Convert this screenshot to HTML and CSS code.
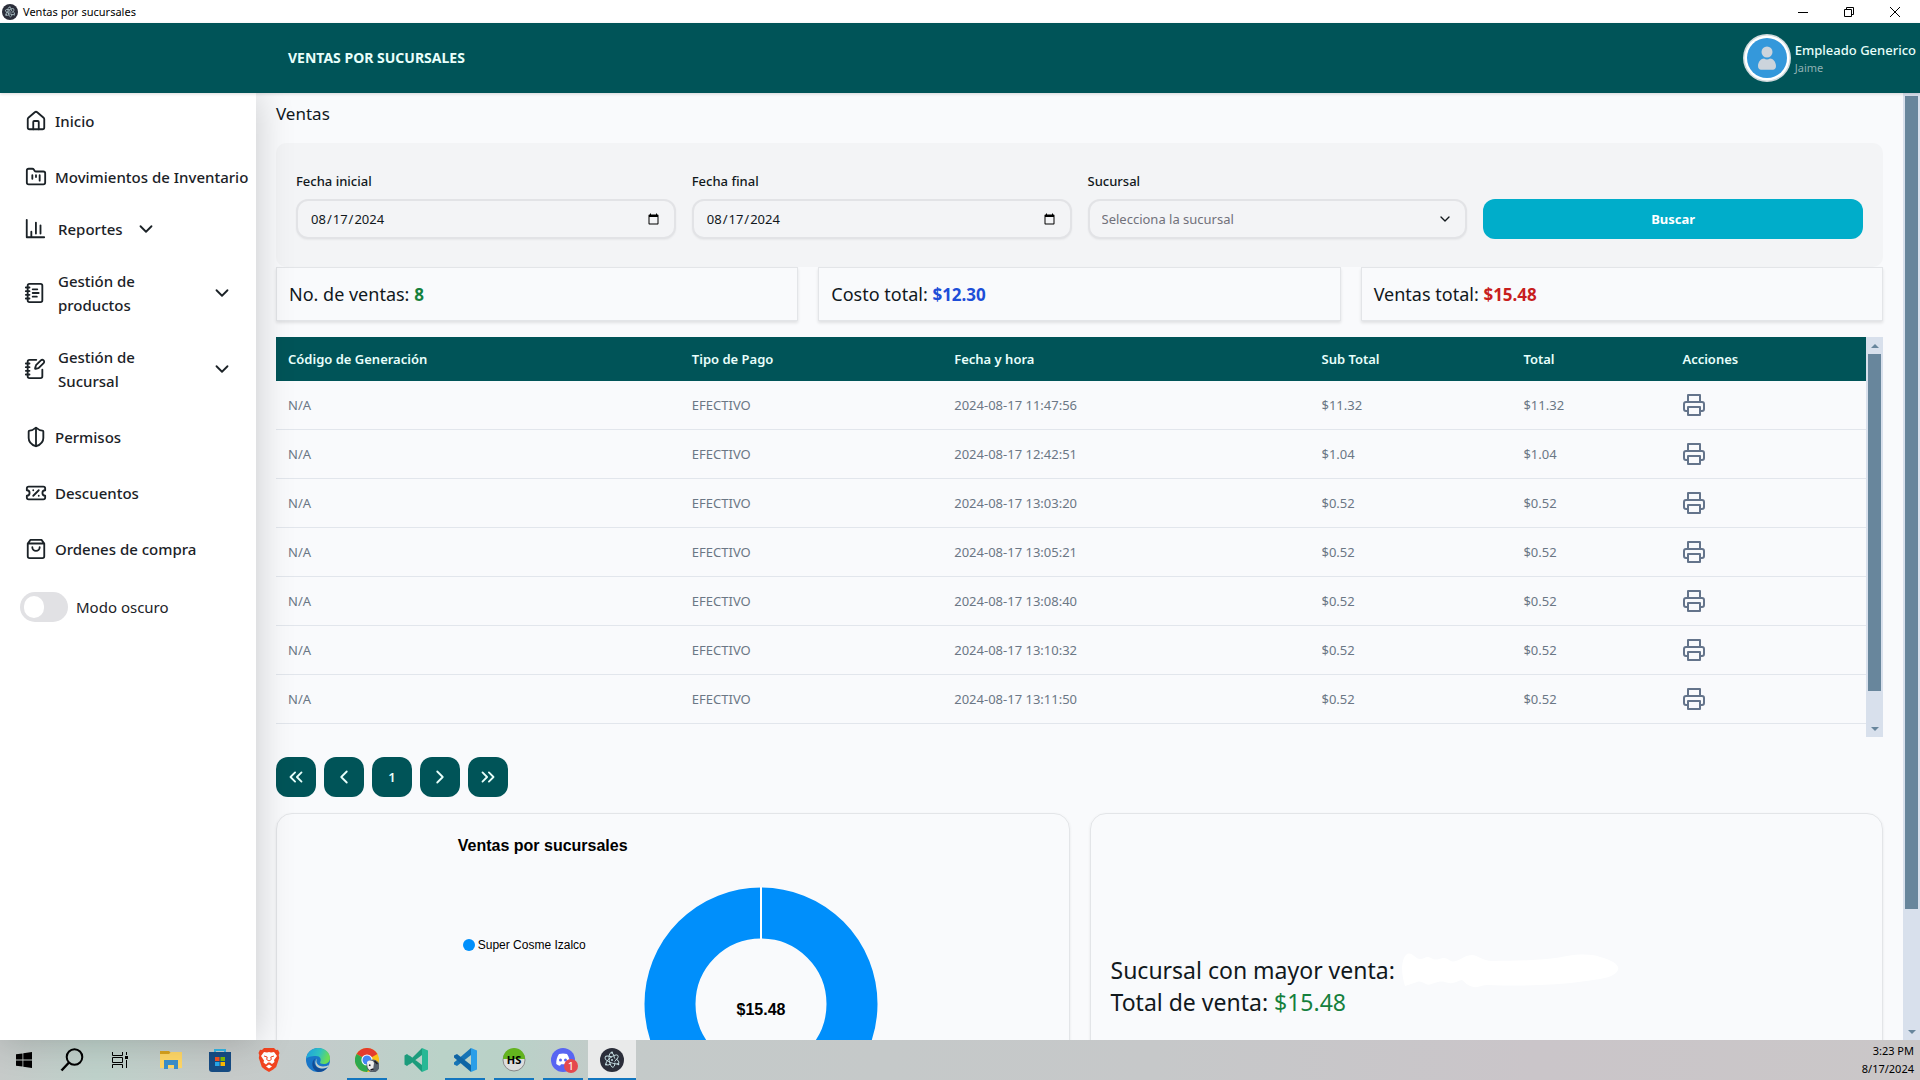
FILE: index.html
```html
<!DOCTYPE html>
<html lang="es">
<head>
<meta charset="utf-8">
<title>Ventas por sucursales</title>
<link rel="stylesheet" href="styles.css">
</head>
<body>
<svg class="sprite" aria-hidden="true">
  <symbol id="i-electron" viewBox="0 0 24 24">
    <circle cx="12" cy="12" r="12" fill="#2b2e3a"/>
    <g fill="none" stroke="#c6dfe4" stroke-width=".9">
      <ellipse cx="12" cy="12" rx="7.4" ry="2.8" transform="rotate(22 12 12)" stroke-dasharray="24 4"/>
      <ellipse cx="12" cy="12" rx="7.4" ry="2.8" transform="rotate(82 12 12)" stroke-dasharray="24 4"/>
      <ellipse cx="12" cy="12" rx="7.4" ry="2.8" transform="rotate(142 12 12)" stroke-dasharray="24 4"/>
    </g>
    <g fill="#c6dfe4"><circle cx="12" cy="12" r="1"/><circle cx="6" cy="16.5" r="1"/><circle cx="18.3" cy="16.2" r="1"/><circle cx="12" cy="4.6" r="1"/></g>
  </symbol>
  <symbol id="i-down" viewBox="0 0 24 24"><path d="m6 9 6 6 6-6"/></symbol>
  <symbol id="i-print" viewBox="0 0 24 24"><path d="M6 18H4a2 2 0 0 1-2-2v-5a2 2 0 0 1 2-2h16a2 2 0 0 1 2 2v5a2 2 0 0 1-2 2h-2"/><path d="M6 9V2h12v7"/><path d="M6 14h12v8H6z"/></symbol>
</svg>

<div class="titlebar">
  <svg class="app-icon"><use href="#i-electron"/></svg>
  <span class="window-title">Ventas por sucursales</span>
  <button class="win-btn" aria-label="Minimizar"><svg viewBox="0 0 12 12"><path d="M1 6.500h10"/></svg></button>
  <button class="win-btn" aria-label="Restaurar"><svg viewBox="0 0 12 12"><path d="M1.500 3.500h7v7h-7zM3.500 3.500v-2h7v7h-2"/></svg></button>
  <button class="win-btn" aria-label="Cerrar"><svg viewBox="0 0 12 12"><path d="M1 1l10 10M11 1L1 11"/></svg></button>
</div>

<header class="topbar">
  <h1>VENTAS POR SUCURSALES</h1>
  <div class="user">
    <svg class="avatar" viewBox="0 0 48 48"><circle cx="24" cy="24" r="24" fill="#d0dadd"/><circle cx="24" cy="24" r="22.500" fill="#fff"/><circle cx="24" cy="24" r="20" fill="#3498db"/><circle cx="24" cy="18" r="5.500" fill="#ccd4dc"/><path d="M15 32c0-4 3-7.500 6-7.500 2 1.200 4 1.200 6 0 3 0 6 3.500 6 7.500 0 2.500-1.500 3.800-3 3.800H18c-1.500 0-3-1.300-3-3.800z" fill="#ccd4dc"/></svg>
    <div class="user-text"><span class="user-name">Empleado Generico</span><span class="user-role">Jaime</span></div>
  </div>
</header>

<div class="shell">
  <nav class="sidebar">
    <a class="nav-item" href="#"><svg class="icon" viewBox="0 0 24 24"><path d="M15 21v-8a1 1 0 0 0-1-1h-4a1 1 0 0 0-1 1v8"/><path d="M3 10a2 2 0 0 1 .7-1.500l7-6a2 2 0 0 1 2.600 0l7 6A2 2 0 0 1 21 10v9a2 2 0 0 1-2 2H5a2 2 0 0 1-2-2z"/></svg>Inicio</a>
    <a class="nav-item" href="#"><svg class="icon" viewBox="0 0 24 24"><path d="M4 20h16a2 2 0 0 0 2-2V8a2 2 0 0 0-2-2h-7.900a2 2 0 0 1-1.700-.9L9.600 3.900A2 2 0 0 0 7.900 3H4a2 2 0 0 0-2 2v13c0 1.100.9 2 2 2Z"/><path d="M8 10v4M12 10v2M16 10v6"/></svg>Movimientos de Inventario</a>
    <button class="nav-group short"><svg class="icon" viewBox="0 0 24 24"><path d="M3 2v19h19M8 21v-5M13 17V5M18 17V8M8 17v-2"/></svg><span>Reportes</span><svg class="icon caret"><use href="#i-down"/></svg></button>
    <button class="nav-group"><svg class="icon" viewBox="0 0 24 24"><path d="M2 6h4M2 10h4M2 14h4M2 18h4"/><rect width="16" height="20" x="4" y="2" rx="2"/><path d="M9.500 8h5M9.500 12H16M9.500 16H14"/></svg><span>Gestión de productos</span><svg class="icon caret"><use href="#i-down"/></svg></button>
    <button class="nav-group"><svg class="icon" viewBox="0 0 24 24"><path d="M13.400 2H6a2 2 0 0 0-2 2v16a2 2 0 0 0 2 2h12a2 2 0 0 0 2-2v-7.400"/><path d="M2 6h4M2 10h4M2 14h4M2 18h4"/><path d="M21.400 5.600a1 1 0 1 0-3-3l-5 5a2 2 0 0 0-.5.900l-.8 2.800a.5.5 0 0 0 .6.600l2.900-.8a2 2 0 0 0 .8-.5z"/></svg><span>Gestión de Sucursal</span><svg class="icon caret"><use href="#i-down"/></svg></button>
    <a class="nav-item" href="#"><svg class="icon" viewBox="0 0 24 24"><path d="M20 13c0 5-3.500 7.500-7.700 9a1 1 0 0 1-.6 0C7.500 20.500 4 18 4 13V6a1 1 0 0 1 1-1c2 0 4.500-1.200 6.200-2.700a1.200 1.200 0 0 1 1.600 0C14.500 3.800 17 5 19 5a1 1 0 0 1 1 1z"/><path d="M12 22V2"/></svg>Permisos</a>
    <a class="nav-item" href="#"><svg class="icon" viewBox="0 0 24 24"><path d="M2 9a3 3 0 1 1 0 6v2a2 2 0 0 0 2 2h16a2 2 0 0 0 2-2v-2a3 3 0 1 1 0-6V7a2 2 0 0 0-2-2H4a2 2 0 0 0-2 2Z"/><path d="M9 9h.01M15 9l-6 6M15 15h.01"/></svg>Descuentos</a>
    <a class="nav-item" href="#"><svg class="icon" viewBox="0 0 24 24"><path d="M6 2 3 6v14a2 2 0 0 0 2 2h14a2 2 0 0 0 2-2V6l-3-4ZM3 6h18M16 10a4 4 0 0 1-8 0"/></svg>Ordenes de compra</a>
    <label class="switch"><input type="checkbox">Modo oscuro</label>
  </nav>

  <main class="main">
    <h2>Ventas</h2>
    <form class="filters">
      <div class="field"><label for="desde">Fecha inicial</label><input id="desde" type="date" value="2024-08-17"></div>
      <div class="field"><label for="hasta">Fecha final</label><input id="hasta" type="date" value="2024-08-17"></div>
      <div class="field"><label for="sucursal">Sucursal</label>
        <div class="select"><select id="sucursal"><option>Selecciona la sucursal</option></select><svg class="icon"><use href="#i-down"/></svg></div></div>
      <button class="search" type="button">Buscar</button>
    </form>

    <section class="stats">
      <p class="stat">No. de ventas: <b class="green">8</b></p>
      <p class="stat">Costo total: <b class="blue">$12.30</b></p>
      <p class="stat">Ventas total: <b class="red">$15.48</b></p>
    </section>

    <section class="table-wrap">
      <div class="table-scroll">
        <table>
          <colgroup><col class="c1"><col class="c2"><col class="c3"><col class="c4"><col class="c5"><col></colgroup>
          <thead><tr><th>Código de Generación</th><th>Tipo de Pago</th><th>Fecha y hora</th><th>Sub Total</th><th>Total</th><th>Acciones</th></tr></thead>
          <tbody>
            <tr><td>N/A</td><td>EFECTIVO</td><td>2024-08-17 11:47:56</td><td>$11.32</td><td>$11.32</td><td><button class="print" aria-label="Imprimir"><svg class="icon"><use href="#i-print"/></svg></button></td></tr>
            <tr><td>N/A</td><td>EFECTIVO</td><td>2024-08-17 12:42:51</td><td>$1.04</td><td>$1.04</td><td><button class="print" aria-label="Imprimir"><svg class="icon"><use href="#i-print"/></svg></button></td></tr>
            <tr><td>N/A</td><td>EFECTIVO</td><td>2024-08-17 13:03:20</td><td>$0.52</td><td>$0.52</td><td><button class="print" aria-label="Imprimir"><svg class="icon"><use href="#i-print"/></svg></button></td></tr>
            <tr><td>N/A</td><td>EFECTIVO</td><td>2024-08-17 13:05:21</td><td>$0.52</td><td>$0.52</td><td><button class="print" aria-label="Imprimir"><svg class="icon"><use href="#i-print"/></svg></button></td></tr>
            <tr><td>N/A</td><td>EFECTIVO</td><td>2024-08-17 13:08:40</td><td>$0.52</td><td>$0.52</td><td><button class="print" aria-label="Imprimir"><svg class="icon"><use href="#i-print"/></svg></button></td></tr>
            <tr><td>N/A</td><td>EFECTIVO</td><td>2024-08-17 13:10:32</td><td>$0.52</td><td>$0.52</td><td><button class="print" aria-label="Imprimir"><svg class="icon"><use href="#i-print"/></svg></button></td></tr>
            <tr><td>N/A</td><td>EFECTIVO</td><td>2024-08-17 13:11:50</td><td>$0.52</td><td>$0.52</td><td><button class="print" aria-label="Imprimir"><svg class="icon"><use href="#i-print"/></svg></button></td></tr>
          </tbody>
        </table>
      </div>
      <div class="scrollbar"><i class="arrow up"></i><div class="track"><div class="thumb table-thumb"></div></div><i class="arrow down"></i></div>
    </section>

    <div class="pager">
      <button aria-label="Primera"><svg class="icon" viewBox="0 0 24 24"><path d="m11 17-5-5 5-5M18 17l-5-5 5-5"/></svg></button>
      <button aria-label="Anterior"><svg class="icon" viewBox="0 0 24 24"><path d="m15 18-6-6 6-6"/></svg></button>
      <button>1</button>
      <button aria-label="Siguiente"><svg class="icon" viewBox="0 0 24 24"><path d="m9 18 6-6-6-6"/></svg></button>
      <button aria-label="Última"><svg class="icon" viewBox="0 0 24 24"><path d="m6 17 5-5-5-5M13 17l5-5-5-5"/></svg></button>
    </div>

    <section class="cards">
      <div class="card">
        <div class="chart">
          <h3>Ventas por sucursales</h3>
          <div class="chart-row">
            <div class="legend"><i></i>Super Cosme Izalco</div>
            <svg class="donut" viewBox="0 0 234 234"><circle cx="117" cy="117" r="91" fill="none" stroke="#008ffb" stroke-width="51"/><path d="M117 0v52" stroke="#fff" stroke-width="2"/><text x="117" y="128" text-anchor="middle">$15.48</text></svg>
          </div>
        </div>
      </div>
      <div class="card summary">
        <p>Sucursal con mayor venta: <svg class="smudge" viewBox="0 0 220 36"><path d="M4 34C0 22 0 8 5 3c5-5 9 4 14 4s6-4 11-1 7 1 12 0 7 5 13 3 10-6 16-6 10 6 20 6c30 0 55-1 75-5 14-2 25-2 33 1 12 3 20 8 18 13-4 8-18 9-32 11-32 5-70 5-98 4-6 0-10 3-14 2-7-1-9-5-12-7-5 1-8 4-13 3s-6-2-11-1-8 4-12 2-6-3-9-2z" fill="#fff"/></svg></p>
        <p>Total de venta: <span class="green">$15.48</span></p>
      </div>
    </section>
  </main>
  <div class="scrollbar page-bar"><div class="track"><div class="thumb page-thumb"></div></div><i class="arrow down"></i></div>
</div>

<footer class="taskbar">
  <button aria-label="Inicio de Windows"><svg viewBox="0 0 16 16" width="16" height="16"><path d="M0 2.300 6.500 1.400v6.200H0zM7.300 1.300 16 0v7.600H7.300zM0 8.400h6.500v6.200L0 13.700zM7.300 8.400H16V16l-8.700-1.300z"/></svg></button>
  <button aria-label="Buscar"><svg viewBox="0 0 24 24" width="24" height="24" fill="none" stroke="#000" stroke-width="2"><circle cx="14.500" cy="9" r="7.800"/><path d="M9 14.500 1.500 22.500" stroke-width="2.500"/></svg></button>
  <button class="tasks" aria-label="Vista de tareas"><svg viewBox="0 0 16 16" width="16" height="16" fill="none" stroke="#000"><path d="M.5 0v3.500h10V0M.5 5.500h10v5H.5zM.5 16v-3.500h10V16M14.500 0v3M14.500 8v8"/><path d="M13 4h3v3h-3z" fill="#000" stroke="none"/></svg></button>
  <button aria-label="Explorador"><svg viewBox="0 0 24 24" width="24" height="24"><path d="M1 3h9l2 2v4H1z" fill="#d9a31e"/><path d="M1 6h9l2-2h11v16H1z" fill="#ffd766"/><path d="M5 21v-9h14v9h-4v-4H9v4z" fill="#3c8fcb"/></svg></button>
  <button aria-label="Tienda"><svg viewBox="0 0 24 24" width="24" height="24"><path d="M7 6V2h10v4" fill="none" stroke="#35b5e5" stroke-width="2"/><path d="M1 4h22v17a3 3 0 0 1-3 3H4a3 3 0 0 1-3-3z" fill="#174c84"/><path d="M7 9h4.500v4H7z" fill="#f25022"/><path d="M12.500 9H17v4h-4.500z" fill="#7fba00"/><path d="M7 14h4.500v4H7z" fill="#28a8ea"/><path d="M12.500 14H17v4h-4.500z" fill="#ffb900"/></svg></button>
  <button aria-label="Brave"><svg viewBox="0 0 24 24" width="24" height="24"><path d="M7 0h10l2 2 2-.2L22.500 5l-.8 2 .5 3-3 9-3 2.500L12 24l-4.200-2.500-3-2.500-3-9 .5-3-.8-2L3 1.800 5 2z" fill="#f1431f"/><path d="m7 4 3 .6L12 4l2 .6 3-.6 3 4-3 4 .5 2-2.500 2-2-1.500-1-.1-1 .1L9 16.600l-2.500-2L7 12.600 4 8z" fill="#fff"/><path d="m7 8 3.200 1-.5 2.500L12 13l2.300-1.500-.5-2.500L17 8" fill="none" stroke="#f1431f"/><path d="m9 18.500 3-2 3 2-3 2z" fill="#fff"/></svg></button>
  <button aria-label="Edge"><svg viewBox="0 0 24 24" width="24" height="24"><defs><linearGradient id="edge" x2="1" y2=".3"><stop stop-color="#1b9de2"/><stop offset=".6" stop-color="#2fc2c0"/><stop offset="1" stop-color="#6bdc55"/></linearGradient></defs><circle cx="12" cy="12" r="12" fill="#1976c8"/><path d="M0 11C.8 4.500 6 0 12 0c7 0 12 4.800 12 10 0 4-3 6-6.500 6-2.600 0-3.800-.9-3.400-1.700 1.600-3 .2-6.300-4.100-6.300C5 8 1 9 0 11z" fill="url(#edge)"/><path d="M9.500 10C6.500 14 9 20 15 20.500c2.500.2 5-.5 6.800-1.600C19.600 22.500 16 24 12 24 6 22 4 14 9.500 10z" fill="#124c96"/><path d="M11 10.500c-2 4 1 8 6 8 3 0 5-.8 6-2l-1.200 2.400c-2 1-4.300 1.600-6.800 1.600-5-.5-7.500-6-4-10z" fill="#c3cecb"/></svg></button>
  <button class="open" aria-label="Chrome"><svg viewBox="0 0 24 24" width="24" height="24"><circle cx="12" cy="12" r="12" fill="#fbc116"/><path d="M12 12 1.600 6A12 12 0 0 1 22.400 6z" fill="#e33b2e"/><path d="M12 12 1.600 6A12 12 0 0 0 12 24l4-7z" fill="#2da94f"/><circle cx="12" cy="12" r="5.600" fill="#fff"/><circle cx="12" cy="12" r="4.500" fill="#4285f4"/><circle cx="18" cy="18" r="6.500" fill="#56606b"/><path d="M12 14c2-2 6-2 7 1l-1 7c-3 2-6-1-6-8z" fill="#eee"/><path d="m14 17 1.500.5m4-4.500 3 3m-7 6 3-1" stroke="#1a1a22" stroke-width="1.500"/></svg></button>
  <button aria-label="VS Code Insiders"><svg viewBox="0 0 24 24" width="24" height="24"><path d="M18 0 8 10 3 6 .5 7.500v9L3 18l5-4 10 10V17L5.500 7.500 3 12l2.500 4.500L18 7z" fill="#1c9c7c"/><path d="M18 0l6 2.500v19L18 24z" fill="#28b895"/></svg></button>
  <button class="open" aria-label="VS Code"><svg viewBox="0 0 24 24" width="24" height="24"><path d="M18 7 4 18l-3-1.500v-2L18 0z" fill="#1674b5"/><path d="M18 17 4 6 1 7.500v2L18 24z" fill="#0f65a5"/><path d="M18 0l6 2.500v19L18 24z" fill="#2b9ee8"/></svg></button>
  <button class="open" aria-label="HeidiSQL"><svg viewBox="0 0 24 24" width="24" height="24"><circle cx="12" cy="12" r="11" fill="#ddd" stroke="#888"/><path d="M1 11a11 11 0 0 1 22 0z" fill="#63b41e"/><text class="hs" x="12" y="16" text-anchor="middle">HS</text></svg></button>
  <button class="open" aria-label="Discord"><svg viewBox="0 0 24 24" width="24" height="24"><circle cx="12" cy="12" r="12" fill="#5865f2"/><path d="M8 6c2.500-.8 5.500-.8 8 0 2 3 3 6.500 2.700 10-1.300 1-2.500 1.500-3.700 1.700l-1-1.500h-4l-1 1.500c-1.200-.2-2.400-.7-3.700-1.700C5 12.500 6 9 8 6z" fill="#fff"/><circle cx="9.500" cy="12" r="1.500" fill="#5865f2"/><circle cx="14.500" cy="12" r="1.500" fill="#5865f2"/></svg><span class="badge">1</span></button>
  <button class="open active" aria-label="Electron"><svg width="24" height="24"><use href="#i-electron"/></svg></button>
  <div class="clock"><span>3:23 PM</span><span>8/17/2024</span></div>
</footer>
</body>
</html>
```
FILE: styles.css
```css
* { box-sizing: border-box; }
body {
  margin: 0;
  height: 100vh;
  display: flex;
  flex-direction: column;
  overflow: hidden;
  background: #f9fafc;
  color: #11181c;
  font: 400 13px/20px "Noto Sans", "Open Sans", sans-serif;
}
h1, h2, h3, p { margin: 0; }
button, input, select { font: inherit; color: inherit; }
button { border: 0; background: none; padding: 0; }
.sprite { position: absolute; width: 0; height: 0; }
.icon {
  width: 22px; height: 22px; flex: none;
  fill: none; stroke: currentColor; stroke-width: 2;
  stroke-linecap: round; stroke-linejoin: round;
}
.green { color: #15803d; }
.blue { color: #1d4ed8; }
.red { color: #c81e1e; }

/* Window title bar */
.titlebar { display: flex; align-items: center; flex: none; height: 23px; padding-right: 2px; background: #fff; color: #000; }
.app-icon { width: 16px; height: 16px; margin: 0 5px 0 2px; }
.window-title { flex: 1; font-size: 11px; }
.win-btn { width: 46px; height: 20px; display: grid; place-items: center; }
.win-btn svg { width: 12px; height: 12px; fill: none; stroke: #000; }

/* Header */
.topbar {
  position: relative; z-index: 3;
  display: flex; align-items: center; justify-content: space-between; flex: none;
  height: 70px; padding: 0 4px 0 288px;
  background: #005458; color: #e8fffb;
  box-shadow: 0 1px 3px rgba(0, 0, 0, .15);
}
.topbar h1 { font-size: 14px; font-weight: 700; }
.user { display: flex; align-items: center; gap: 4px; }
.avatar { width: 48px; height: 48px; }
.user-text { display: flex; flex-direction: column; font-weight: 500; }
.user-role { font-size: 11px; line-height: 16px; color: #8fb0b3; font-weight: 400; }

.shell { display: flex; flex: 1; min-height: 0; }

/* Sidebar */
.sidebar {
  position: relative; z-index: 2;
  width: 256px; flex: none;
  background: #fff; color: #1b2227;
  font-size: 15px; font-weight: 500; line-height: 24px;
  box-shadow: 0 0 36px rgba(0, 0, 0, .2);
}
.nav-item { display: flex; align-items: center; gap: 8px; height: 56px; padding-left: 25px; color: inherit; text-decoration: none; white-space: nowrap; }
.nav-group { display: flex; align-items: center; width: 100%; height: 76px; gap: 12px; padding: 0 23px 0 24px; text-align: left; }
.nav-group + .nav-item { margin-top: 2px; }
.nav-group span { width: 96px; }
.nav-group .caret { margin-left: auto; }
.nav-group.short { height: 48px; margin-bottom: 2px; }
.nav-group.short span { width: auto; }
.nav-group.short .caret { margin-left: 0; }
.switch { display: flex; align-items: center; gap: 8px; height: 60px; padding-left: 20px; font-weight: 400; }
.switch input { appearance: none; width: 48px; height: 30px; margin: 0; padding: 4px; border-radius: 15px; background: #e1e1e4; }
.switch input::before { content: ""; display: block; width: 20px; height: 22px; border-radius: 11px; background: #fff; }
.switch input:checked::before { margin-left: auto; }

/* Main column */
.main { flex: 1; min-width: 0; overflow: hidden; padding: 8px 20px 0; }
h2 { height: 42px; font-size: 17px; font-weight: 400; line-height: 26px; }
.filters {
  display: grid; grid-template-columns: repeat(4, 1fr); gap: 16px; align-items: end;
  height: 124px; padding: 0 20px 28px;
  border-radius: 10px; background: #f3f4f6;
}
.field { display: flex; flex-direction: column; gap: 8px; min-width: 0; }
.field label { font-weight: 500; }
.field input, .field select {
  width: 100%; height: 40px; padding: 0 12px;
  border: 2px solid #e2e3e6; border-radius: 12px; background: #f3f4f6;
  box-shadow: 0 1px 2px rgba(0, 0, 0, .05);
}
.select { display: grid; align-items: center; }
.select > * { grid-area: 1 / 1; }
.field select { appearance: none; padding: 0 12px; color: #71717a; }
.select .icon { width: 16px; height: 16px; justify-self: end; margin-right: 14px; pointer-events: none; }
.search { height: 40px; border-radius: 12px; background: #00adca; color: #fff; font-weight: 700; }

.stats { display: grid; grid-template-columns: repeat(3, 1fr); gap: 20px; }
.stat {
  height: 54px; padding: 0 12px; border: 1px solid #e3e5e8; background: #f9fafc;
  font-size: 18px; line-height: 52px; box-shadow: 0 2px 3px rgba(0, 0, 0, .1);
}
.stat b { font-size: 17px; font-weight: 700; }

/* Sales table */
.table-wrap { display: flex; height: 400px; margin-top: 16px; }
.table-scroll { flex: 1; overflow: hidden; }
table { width: 100%; table-layout: fixed; border-collapse: separate; border-spacing: 0; }
.c1 { width: 25.4%; } .c2 { width: 16.5%; } .c3 { width: 23.1%; } .c4 { width: 12.7%; } .c5 { width: 10%; }
th, td { padding: 0 12px; text-align: left; }
th { height: 44px; background: #005458; color: #e8fffb; font-weight: 600; }
td { height: 49px; border-bottom: 1px solid #e2e6ec; color: #6b7785; }
.print { display: block; color: #64748b; }
.print .icon { display: block; width: 24px; height: 24px; }

.scrollbar { display: flex; flex-direction: column; align-items: center; flex: none; width: 17px; background: #d8e0ec; }
.track { flex: 1; align-self: stretch; padding: 0 2px; }
.thumb { background: #68869c; }
.table-thumb { height: 92%; }
.page-bar { padding-top: 3px; }
.page-thumb { height: 87.7%; }
.arrow { height: 17px; display: grid; place-items: center; }
.arrow::before { content: ""; border: 4px solid transparent; }
.arrow.up::before { border-top: 0; border-bottom-color: #68869c; }
.arrow.down::before { border-bottom: 0; border-top-color: #68869c; }

.pager { display: flex; gap: 8px; margin: 20px 0 16px; }
.pager button { display: grid; place-items: center; width: 40px; height: 40px; border-radius: 12px; background: #005458; color: #e8fffb; font-weight: 600; }

/* Cards below the table */
.cards { display: grid; grid-template-columns: 1fr 1fr; gap: 20px; }
.card { height: 346px; border: 1px solid #e3e5e8; border-radius: 16px; box-shadow: 0 1px 3px rgba(0, 0, 0, .08); }
.chart { width: 430px; margin: 0 auto; padding-top: 22px; color: #000; font-family: "Liberation Sans", Arial, sans-serif; }
h3 { font-size: 16px; line-height: 20px; }
.chart-row { display: flex; justify-content: space-between; margin-top: 31px; padding-right: 10px; }
.legend { display: flex; align-items: center; gap: 3px; height: 16px; margin: 50px 0 0 5px; font-size: 12px; }
.legend i { width: 12px; height: 12px; border-radius: 50%; background: #008ffb; }
.donut { width: 234px; height: 234px; font-size: 16px; font-weight: 700; }
.summary { display: flex; flex-direction: column; justify-content: center; padding: 0 20px; font-size: 23px; line-height: 32px; }
.summary p { display: flex; align-items: center; gap: 6px; height: 32px; white-space: nowrap; }
.smudge { width: 220px; height: 36px; }

/* Taskbar */
.taskbar { display: flex; flex: none; height: 40px; background: linear-gradient(90deg, #c6cac9, #bed1ca 5%, #c6cac9 12%, #c3cccb 17%, #bad2c8 23%, #bad1c8 27%, #c4cac9 32%, #c6c8c9 60%, #cac5c9 80%, #cac7c8); color: #000; }
.taskbar button { position: relative; display: grid; place-items: center; width: 48px; margin-right: 1px; }
.taskbar button:nth-child(-n+2) { margin-right: 0; }
.taskbar .tasks { margin-right: 3px; }
.taskbar .open::after { content: ""; position: absolute; left: 4px; right: 4px; bottom: 0; height: 2px; background: #1376bf; }
.taskbar .active { background: #e9eaea; }
.taskbar .active::after { left: 0; right: 0; }
.badge { position: absolute; left: 25px; top: 19px; width: 14px; height: 14px; border-radius: 50%; background: #e5484d; color: #fff; font-size: 11px; line-height: 14px; }
.hs { font-size: 11px; font-weight: 700; }
.clock { display: flex; flex-direction: column; align-items: flex-end; justify-content: center; margin-left: auto; padding-right: 6px; font-size: 11px; line-height: 18px; }
```
